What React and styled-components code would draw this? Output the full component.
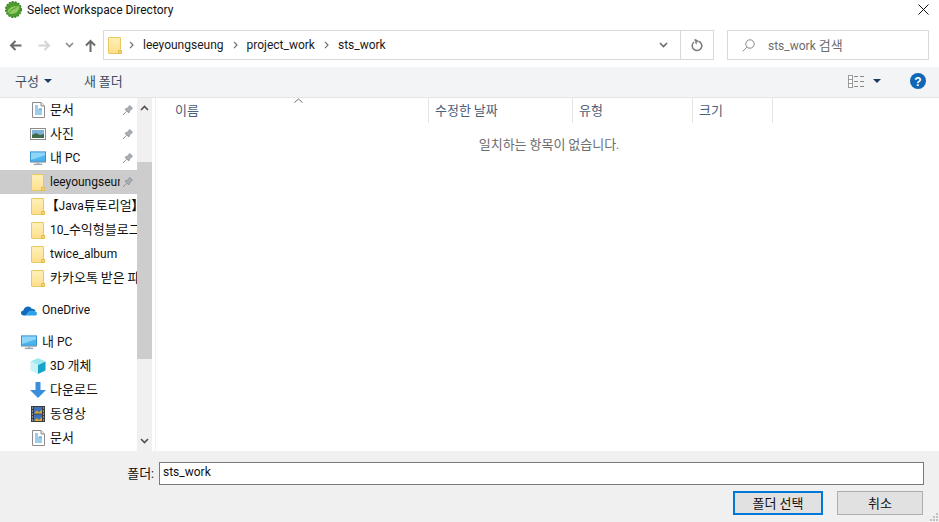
import React from "react";
import styled, { createGlobalStyle } from "styled-components";

const Global = createGlobalStyle`
  html, body { margin: 0; padding: 0; background: #fff; overflow: hidden; }
  body { font-family: Roboto, "Noto Sans CJK KR", sans-serif; font-size: 12px; line-height: 16px; color: #1a1a1a; }
  * { box-sizing: border-box; }
`;

const Dialog = styled.div`
  width: 939px; height: 522px; display: flex; flex-direction: column; background: #fff;
`;
const TitleBar = styled.div`
  height: 20px; display: flex; align-items: center; padding: 0 10px 1px 5px; gap: 5px; flex: none;
`;
const TitleText = styled.div`
  flex: 1; color: #111; white-space: nowrap;
`;
const NavBar = styled.div`
  height: 47px; flex: none; display: flex; align-items: center; padding: 3px 10px 0 0;
`;
const NavIcons = styled.div`
  width: 103px; height: 30px; flex: none; display: flex; align-items: center; padding-left: 9px;
`;
const NavSlot = styled.div`
  width: ${p => p.$w}px; display: flex; align-items: center; flex: none;
`;
const AddressBox = styled.div`
  width: 611px; height: 30px; border: 1px solid #d9d9d9; display: flex; align-items: center; flex: none;
`;
const Crumbs = styled.div`
  flex: 1; display: flex; align-items: center; padding-left: 4px; gap: 9px; color: #1a1a1a;
`;
const CrumbFolder = styled.div`
  display: flex; margin-right: -2px;
`;
const AddressDrop = styled.div`
  width: 33px; display: flex; justify-content: center; align-items: center;
`;
const AddressEnd = styled.div`
  width: 33px; height: 100%; border-left: 1px solid #d9d9d9; display: flex; align-items: center; justify-content: center;
`;
const SearchBox = styled.div`
  margin-left: 13px; width: 202px; height: 30px; border: 1px solid #d9d9d9; display: flex; align-items: center;
  padding-left: 14px; gap: 13px; color: #6d6d6d;
`;
const CommandBar = styled.div`
  height: 31px; flex: none; background: #f3f4f6; border-bottom: 1px solid #e5e5e5; display: flex; align-items: center; padding: 0 13px 2px 15px;
`;
const CmdButton = styled.div`
  display: flex; align-items: center; gap: 5px; color: #3a4c60; margin-right: ${p => p.$mr || 0}px; white-space: nowrap;
`;
const Caret = styled.span`
  width: 0; height: 0; border-left: 4px solid transparent; border-right: 4px solid transparent; border-top: 4px solid #1f3a5f; display: block;
  margin-right: ${p => p.$mr || 0}px;
`;
const ViewIcon = styled.svg`
  margin-right: 9px;
`;
const Spacer = styled.div` flex: 1; `;
const Body = styled.div`
  flex: 1; display: flex; min-height: 0;
`;
const Sidebar = styled.div`
  width: 137px; flex: none; overflow: hidden; display: flex; flex-direction: column;
`;
const Row = styled.div`
  height: 24px; flex: none; display: flex; align-items: center; position: relative;
  padding-left: ${p => (p.$top ? 21 : 30)}px; background: ${p => (p.$active ? "#cccccc" : "transparent")};
  margin-top: ${p => (p.$gap ? 8 : 0)}px;
`;
const IconBox = styled.div`
  width: 16px; height: 16px; flex: none; display: flex; align-items: center; justify-content: center;
  margin-right: ${p => (p.$top ? 5 : 4)}px;
`;
const RowLabel = styled.div`
  white-space: nowrap; overflow: hidden; color: #111; line-height: 20px; height: 21px;
  margin-top: ${p => (p.$latin ? 0 : -2)}px;
  flex: ${p => (p.$max ? "none" : "1 1 0")}; width: ${p => p.$max || 0}px;
`;
const PinBox = styled.div`
  position: absolute; left: 122px; top: 6px; width: 12px; height: 12px;
`;
const Scroll = styled.div`
  width: 15px; flex: none; background: #f0f0f0; display: flex; flex-direction: column; align-items: center;
`;
const ScrollArrow = styled.div`
  height: 20px; width: 100%; flex: none; display: flex; align-items: center; justify-content: center;
`;
const ScrollTrack = styled.div`
  flex: 1; width: 100%; padding: 44px 0 72px;
`;
const Thumb = styled.div`
  height: 100%; background: #cdcdcd;
`;
const Main = styled.div`
  flex: 1; margin-left: 3px; border-left: 1px solid #f0f0f0; display: flex; flex-direction: column; min-width: 0;
`;
const HeaderRow = styled.div`
  height: 25px; display: flex; position: relative; flex: none;
`;
const HeaderCell = styled.div`
  width: ${p => p.$w}px; border-right: 1px solid #e5e5e5; padding: 0 0 2px ${p => p.$pl || 6}px; display: flex; align-items: center; color: #4c607a; flex: none;
`;
const SortArrow = styled.svg`
  position: absolute; left: 138px; top: 0;
`;
const Empty = styled.div`
  text-align: center; margin-top: 13px; color: #6d6d6d; width: 786px;
`;
const Footer = styled.div`
  height: 71px; flex: none; background: #f0f0f0; position: relative; display: flex; flex-direction: column; padding: 11px 15px 0 0;
`;
const FieldRow = styled.div`
  display: flex; align-items: center; justify-content: flex-end; height: 23px; gap: 5px;
`;
const FieldLabel = styled.div`
  color: #111; margin-top: -1px;
`;
const FieldInput = styled.div`
  width: 765px; height: 23px; background: #fff; border: 1px solid #7a7a7a; color: #111; padding-left: 3px; line-height: 19px;
`;
const ButtonRow = styled.div`
  display: flex; justify-content: flex-end; margin-top: 6px; gap: 14px; padding-right: 1px;
`;
const DialogButton = styled.div`
  width: ${p => p.$w}px; height: 24px; background: #e1e1e1; display: flex; align-items: center; justify-content: center;
  color: #111; border: ${p => (p.$primary ? "2px solid #0078d7" : "1px solid #adadad")};
`;
const Grip = styled.svg`
  position: absolute; right: 1px; bottom: 1px;
`;
const Ko = styled.span`
  font-family: "Noto Sans CJK KR", sans-serif; font-size: 13px;
`;
const Punct = styled(Ko)`
  font-feature-settings: "palt"; font-weight: 700; margin-left: ${p => (p.$lead ? 2 : 0)}px;
`;

/* Hangul runs are set a size larger than Latin ones, as the reference's font does. */
const T = ({ children }) =>
  children.split(/([\u3000-\u303f]|[\uac00-\ud7a3]+(?: [\uac00-\ud7a3]+)*)/).map((part, i) => {
    if (i % 2 === 0) return part;
    if (/^[\u3000-\u303f]$/.test(part)) return <Punct key={i} $lead={i === 1}>{part}</Punct>;
    return <Ko key={i}>{part}</Ko>;
  });

const Folder = () => (
  <svg width="14" height="17" viewBox="0 0 14 17">
    <defs>
      <linearGradient id="fg" x1="0" y1="0" x2="0" y2="1">
        <stop offset="0" stopColor="#fff0b8" /><stop offset="1" stopColor="#fddf8a" />
      </linearGradient>
    </defs>
    <rect x="0.5" y="0.5" width="12" height="16" rx="0.5" fill="url(#fg)" stroke="#e9c95f" />
    <path d="M10.500 16.500v-3h3v3z" fill="#f8d775" stroke="#e2bb4c" />
  </svg>
);
const Pin = () => (
  <svg width="12" height="12" viewBox="0 0 12 12">
    <path d="M1 11l3.400-3.600M3 5.200L6.800 9l.8-2.200 2.800-2.600L7.800 1.600 5.200 4.400z" fill="#a9aeb3" stroke="#8f959b" strokeWidth="1" />
  </svg>
);
const DocIcon = () => (
  <svg width="13" height="16" viewBox="0 0 13 16">
    <path d="M.5.5h8.500l3.500 3.500v11.500H.5z" fill="#fff" stroke="#8c8c8c" />
    <path d="M9 .5V4h3.500" fill="#e6e6e6" stroke="#8c8c8c" />
    <path d="M3 4h3M3 6h3M7 7h3M3 8h7M3 10h7M3 12h7" stroke="#3d9bd6" strokeWidth="1" />
  </svg>
);
const PhotoIcon = () => (
  <svg width="16" height="12" viewBox="0 0 16 12">
    <rect x=".5" y=".5" width="15" height="11" fill="#fff" stroke="#8c8c8c" />
    <rect x="2" y="2" width="12" height="8" fill="#7fb2d9" />
    <path d="M2 7l4-2 4 2 4-1v4H2z" fill="#3f6b4a" />
  </svg>
);
const PcIcon = () => (
  <svg width="17" height="15" viewBox="0 0 17 15">
    <rect x="0.5" y="0.5" width="16" height="10" fill="#4cb4ee" stroke="#2b8fd0" />
    <path d="M1 1h15v3L1 9z" fill="#8fd5f7" />
    <rect x="0" y="11" width="17" height="1" fill="#9aa7b0" />
    <rect x="7" y="12" width="3" height="1" fill="#9aa7b0" />
    <rect x="4" y="13" width="9" height="1.500" fill="#9aa7b0" />
  </svg>
);
const Cloud = () => (
  <svg width="16" height="11" viewBox="0 0 16 11">
    <path d="M3 10.500C1 10.500 0 9.300 0 8s1-2.400 2.300-2.500C3 3 5 1.500 7 1.500c1.600 0 3 .9 3.700 2.200C13 3.600 14.500 5 14.500 6.500H8L5 10.500z" fill="#0f6cbd" />
    <path d="M5 10.500L8 6.500c2-1.600 4.500-1.200 6 0 1.300.3 2 1.200 2 2.200s-.8 1.800-2 1.800z" fill="#2aa3e8" />
  </svg>
);
const Cube = () => (
  <svg width="16" height="16" viewBox="0 0 16 16">
    <path d="M8 0l7.500 3.500L8 7 .5 3.500z" fill="#9ce8ee" />
    <path d="M.5 3.500L8 7v9L.5 12.500z" fill="#c8f2f4" />
    <path d="M15.500 3.500L8 7v9l7.500-3.500z" fill="#17a4c8" />
  </svg>
);
const Download = () => (
  <svg width="16" height="16" viewBox="0 0 16 16">
    <path d="M5.500 0h5v8H16l-8 8-8-8h5.500z" fill="#3a8fdc" />
  </svg>
);
const Film = () => (
  <svg width="14" height="16" viewBox="0 0 14 16">
    <rect width="14" height="16" fill="#3c3c3c" />
    <rect x="3" y="1" width="8" height="6.500" fill="#3f72b8" />
    <rect x="3" y="8.500" width="8" height="6.500" fill="#3f72b8" />
    <path d="M3 7.500l3-3 2 2 3-3v4zM3 15l3-3 2 2 3-3v4z" fill="#e0a52c" />
    <path d="M1 2h1M1 5h1M1 8h1M1 11h1M1 14h1M12 2h1M12 5h1M12 8h1M12 11h1M12 14h1" stroke="#e8e8e8" />
  </svg>
);
const Chevron = ({ up, color = "#505050" }) => (
  <svg width="9" height="6" viewBox="0 0 9 6">
    <path d={up ? "M1 5l3.500-3.500L8 5" : "M1 1l3.500 3.500L8 1"} fill="none" stroke={color} strokeWidth="1.600" />
  </svg>
);
const CrumbSep = () => (
  <svg width="5" height="8" viewBox="0 0 5 8">
    <path d="M1 .8L4 4 1 7.200" fill="none" stroke="#6f6f6f" strokeWidth="1.200" />
  </svg>
);
const Arrow = ({ d, color, sw = 2 }) => (
  <svg width="13" height="13" viewBox="0 0 13 13">
    <path d={d} fill="none" stroke={color} strokeWidth={sw} />
  </svg>
);
const Spring = () => (
  <svg width="17" height="17" viewBox="0 0 17 17">
    <circle cx="8.500" cy="8.500" r="7.800" fill="#4f9a2e" />
    <circle cx="8.500" cy="8.500" r="7.900" fill="none" stroke="#2f7d2a" strokeDasharray="1.800 1.400" strokeWidth="1.200" />
    <path d="M2.500 11C3.500 6.500 8 4.500 14.500 5.500c-.5 4.500-3.500 7.500-8 7.500-1.600 0-3-.6-4-2z" fill="#8fc95f" />
    <path d="M3.500 12c2-2.500 4.500-4.500 8-5.500" stroke="#4f9a2e" fill="none" />
  </svg>
);

const isLatin = s => !/[\u3000-\u303f\uac00-\ud7a3]/.test(s);

const top = [
  { icon: <DocIcon />, label: "문서", pin: true },
  { icon: <PhotoIcon />, label: "사진", pin: true },
  { icon: <PcIcon />, label: "내 PC", pin: true },
  { icon: <Folder />, label: "leeyoungseung", pin: true, active: true, max: 70 },
  { icon: <Folder />, label: "【Java튜토리얼】" },
  { icon: <Folder />, label: "10_수익형블로그" },
  { icon: <Folder />, label: "twice_album" },
  { icon: <Folder />, label: "카카오톡 받은 파일" },
];
const pcItems = [
  { icon: <Cube />, label: "3D 개체" },
  { icon: <Download />, label: "다운로드" },
  { icon: <Film />, label: "동영상" },
  { icon: <DocIcon />, label: "문서" },
];

export default function App() {
  return (
    <Dialog>
      <Global />
      <TitleBar>
        <Spring />
        <TitleText>Select Workspace Directory</TitleText>
        <svg width="11" height="11" viewBox="0 0 11 11"><path d="M.5.5l10 10M10.500.5l-10 10" stroke="#111" strokeWidth="1" /></svg>
      </TitleBar>
      <NavBar>
        <NavIcons>
          <NavSlot $w={29}><Arrow d="M12.500 6.500H2M6.500 2l-4.500 4.500L6.500 11" color="#6b6b6b" /></NavSlot>
          <NavSlot $w={27}><Arrow d="M.5 6.500H11M6.500 2L11 6.500 6.500 11" color="#d4d4d4" /></NavSlot>
          <NavSlot $w={19}><Chevron color="#8a8a8a" /></NavSlot>
          <NavSlot $w={13}><Arrow d="M6.500 13V2M2 6.500L6.500 2 11 6.500" color="#6b6b6b" /></NavSlot>
        </NavIcons>
        <AddressBox>
          <Crumbs>
            <CrumbFolder><Folder /></CrumbFolder>
            <CrumbSep />
            <span>leeyoungseung</span>
            <CrumbSep />
            <span>project_work</span>
            <CrumbSep />
            <span>sts_work</span>
          </Crumbs>
          <AddressDrop><Chevron color="#6b6b6b" /></AddressDrop>
          <AddressEnd>
            <svg width="12" height="13" viewBox="0 0 12 13"><path d="M7.500 2.200A4.800 4.800 0 1 1 3 3M5 .5v4h-.1M3.500 .5l3.500 2" fill="none" stroke="#7a7a7a" strokeWidth="1.500" /></svg>
          </AddressEnd>
        </AddressBox>
        <SearchBox>
          <svg width="13" height="13" viewBox="0 0 13 13"><circle cx="8" cy="5" r="4.200" fill="none" stroke="#8a8a8a" /><path d="M5 8l-4.500 4.500" stroke="#b08a8a" /></svg>
          <span><T>sts_work 검색</T></span>
        </SearchBox>
      </NavBar>
      <CommandBar>
        <CmdButton $mr={32}><T>구성</T><Caret /></CmdButton>
        <CmdButton><T>새 폴더</T></CmdButton>
        <Spacer />
        <ViewIcon width="16" height="13" viewBox="0 0 16 13">
          <rect x=".5" y=".5" width="4" height="12" fill="#fff" stroke="#9a9a9a" />
          <path d="M1 4.500h3M1 8.500h3" stroke="#9a9a9a" />
          <path d="M6 1.500h4M12 1.500h4M6 6.500h4M12 6.500h4M6 11.500h4M12 11.500h4" stroke="#8a8a8a" />
        </ViewIcon>
        <Caret $mr={29} />
        <svg width="16" height="16" viewBox="0 0 16 16">
          <circle cx="8" cy="8" r="8" fill="#0f67b5" />
          <text x="8" y="12.500" textAnchor="middle" fontSize="12" fontWeight="700" fontFamily="Liberation Sans" fill="#fff">?</text>
        </svg>
      </CommandBar>
      <Body>
        <Sidebar>
          {top.map(r => (
            <Row key={r.label} $active={r.active}>
              <IconBox>{r.icon}</IconBox>
              <RowLabel $max={r.max} $latin={isLatin(r.label)}><T>{r.label}</T></RowLabel>
              {r.pin && <PinBox><Pin /></PinBox>}
            </Row>
          ))}
          <Row $top $gap>
            <IconBox $top><Cloud /></IconBox>
            <RowLabel $latin>OneDrive</RowLabel>
          </Row>
          <Row $top $gap>
            <IconBox $top><PcIcon /></IconBox>
            <RowLabel><T>내 PC</T></RowLabel>
          </Row>
          {pcItems.map(r => (
            <Row key={r.label}>
              <IconBox>{r.icon}</IconBox>
              <RowLabel><T>{r.label}</T></RowLabel>
            </Row>
          ))}
        </Sidebar>
        <Scroll>
          <ScrollArrow><Chevron up /></ScrollArrow>
          <ScrollTrack><Thumb /></ScrollTrack>
          <ScrollArrow><Chevron /></ScrollArrow>
        </Scroll>
        <Main>
          <HeaderRow>
            <HeaderCell $w={273} $pl={19}><T>이름</T></HeaderCell>
            <HeaderCell $w={144}><T>수정한 날짜</T></HeaderCell>
            <HeaderCell $w={120}><T>유형</T></HeaderCell>
            <HeaderCell $w={80}><T>크기</T></HeaderCell>
            <SortArrow width="9" height="5" viewBox="0 0 9 5"><path d="M.5 4.500L4.500 1l4 3.500" fill="none" stroke="#6a6a6a" /></SortArrow>
          </HeaderRow>
          <Empty><T>일치하는 항목이 없습니다.</T></Empty>
        </Main>
      </Body>
      <Footer>
        <FieldRow>
          <FieldLabel><T>폴더</T>:</FieldLabel>
          <FieldInput>sts_work</FieldInput>
        </FieldRow>
        <ButtonRow>
          <DialogButton $w={90} $primary><T>폴더 선택</T></DialogButton>
          <DialogButton $w={86}><T>취소</T></DialogButton>
        </ButtonRow>
        <Grip width="9" height="9" viewBox="0 0 9 9"><path d="M7 1h2v2H7zM4 4h2v2H4zM7 4h2v2H7zM1 7h2v2H1zM4 7h2v2H4zM7 7h2v2H7z" fill="#c0c0c0" /></Grip>
      </Footer>
    </Dialog>
  );
}
